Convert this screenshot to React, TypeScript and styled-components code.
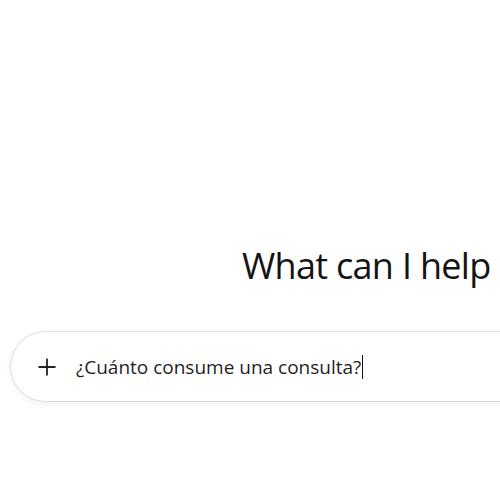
import React from "react";
import styled, { createGlobalStyle } from "styled-components";

const Global = createGlobalStyle`
  html, body { margin: 0; padding: 0; background: #ffffff; }
  body { font-family: "Open Sans", "Noto Sans", sans-serif; color: #1a1a1a; overflow: hidden; }
`;

const Page = styled.main`
  width: 500px;
  height: 500px;
  overflow: hidden;
  display: flex;
  flex-direction: column;
`;

const Heading = styled.h1`
  margin: 244px 0 0 242px;
  font-size: 36px;
  font-weight: 400;
  line-height: 44px;
  white-space: nowrap;
  color: #141414;
  letter-spacing: -0.7px;
`;

const Composer = styled.div`
  margin: 43px 0 0 10px;
  width: 620px;
  height: 69px;
  border: 1px solid #dcdcdc;
  border-radius: 36px;
  box-shadow: 0 2px 6px rgba(0, 0, 0, 0.06);
  display: flex;
  align-items: center;
  padding-left: 26px;
  gap: 19px;
  flex-shrink: 0;
`;

const PlusButton = styled.span`
  width: 20px;
  height: 20px;
  display: flex;
  align-items: center;
  justify-content: center;
`;

const Prompt = styled.span`
  font-size: 19px;
  color: #1f1f1f;
  display: flex;
  align-items: center;
  white-space: nowrap;
`;

const Caret = styled.span`
  display: inline-block;
  width: 1px;
  height: 24px;
  background: #111;
  margin-left: 1px;
`;

export default function App() {
  return (
    <>
      <Global />
      <Page>
        <Heading>What can I help</Heading>
        <Composer>
          <PlusButton>
            <svg width="20" height="20" viewBox="0 0 20 20">
              <path d="M10 1.5v17M1.5 10h17" stroke="#222" strokeWidth="1.8" />
            </svg>
          </PlusButton>
          <Prompt>
            ¿Cuánto consume una consulta?
            <Caret />
          </Prompt>
        </Composer>
      </Page>
    </>
  );
}
